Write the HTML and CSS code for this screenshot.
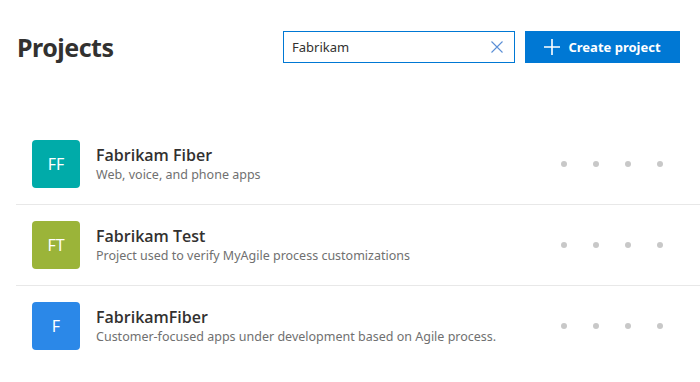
FILE: index.html
```html
<!DOCTYPE html>
<html lang="en">
<head>
  <meta charset="UTF-8">
  <title>Projects</title>
  <link rel="stylesheet" href="styles.css">
</head>
<body>
  <div class="header">
    <h1>Projects</h1>
    <div class="search">
      <span class="search-text">Fabrikam</span>
      <svg class="clear" width="12" height="12" viewBox="0 0 12 12">
        <path d="M0.5 0.5 L11.5 11.5 M11.5 0.5 L0.5 11.5" stroke="#5b8fd6" stroke-width="1.1" fill="none"/>
      </svg>
    </div>
    <button class="create">
      <svg width="16" height="16" viewBox="0 0 16 16">
        <path d="M8 0 V16 M0 8 H16" stroke="#fff" stroke-width="1.6" fill="none"/>
      </svg>
      Create project
    </button>
  </div>

  <div class="list">
    <div class="row">
      <div class="avatar teal">FF</div>
      <div class="info">
        <div class="name">Fabrikam Fiber</div>
        <div class="desc">Web, voice, and phone apps</div>
      </div>
      <div class="dots"><span></span><span></span><span></span><span></span></div>
    </div>
    <div class="row">
      <div class="avatar olive">FT</div>
      <div class="info">
        <div class="name">Fabrikam Test</div>
        <div class="desc">Project used to verify MyAgile process customizations</div>
      </div>
      <div class="dots"><span></span><span></span><span></span><span></span></div>
    </div>
    <div class="row last">
      <div class="avatar blue">F</div>
      <div class="info">
        <div class="name">FabrikamFiber</div>
        <div class="desc">Customer-focused apps under development based on Agile process.</div>
      </div>
      <div class="dots"><span></span><span></span><span></span><span></span></div>
    </div>
  </div>
</body>
</html>
```

FILE: styles.css
```css
body {
  font-family: "Noto Sans", "Open Sans", sans-serif;
  margin: 0;
  padding: 31px 20px 0 16px;
  background-color: #fff;
  color: #323130;
}

.header {
  display: flex;
  align-items: center;
  height: 32px;
}

.header h1 {
  margin: 0;
  padding-left: 1px;
  font-size: 25px;
  font-weight: 700;
  letter-spacing: -0.5px;
  flex: 1;
}

.search {
  width: 211px;
  height: 30px;
  border: 1px solid #0078d4;
  display: flex;
  align-items: center;
  padding: 0 11px 0 8px;
  margin-right: 10px;
  font-size: 13px;
}

.search-text {
  flex: 1;
}

.create {
  width: 155px;
  height: 32px;
  border: none;
  background-color: #0078d4;
  color: white;
  font-family: inherit;
  font-size: 13px;
  font-weight: 700;
  display: flex;
  align-items: center;
  justify-content: center;
  gap: 8px;
  padding: 0;
}

.list {
  margin-top: 61px;
  margin-right: -20px;
}

.row {
  display: flex;
  align-items: center;
  padding: 16px 0 16px 16px;
  border-bottom: 1px solid #e8e8e8;
}

.row.last {
  border-bottom: none;
}

.avatar {
  width: 48px;
  height: 48px;
  border-radius: 4px;
  color: white;
  font-size: 16px;
  display: flex;
  align-items: center;
  justify-content: center;
  margin-right: 16px;
}

.teal { background-color: #00aba9; }
.olive { background-color: #9bb439; }
.blue { background-color: #2b88e8; }

.info {
  flex: 1;
}

.name {
  font-family: "Open Sans", "Noto Sans", sans-serif;
  font-size: 16px;
  font-weight: 600;
  line-height: 22px;
}

.desc {
  font-size: 12.5px;
  color: #707070;
  line-height: 18px;
}

.dots {
  display: flex;
  gap: 26px;
  margin-right: 37px;
}

.dots span {
  width: 6px;
  height: 6px;
  border-radius: 50%;
  background-color: #c8c8c8;
}
```
